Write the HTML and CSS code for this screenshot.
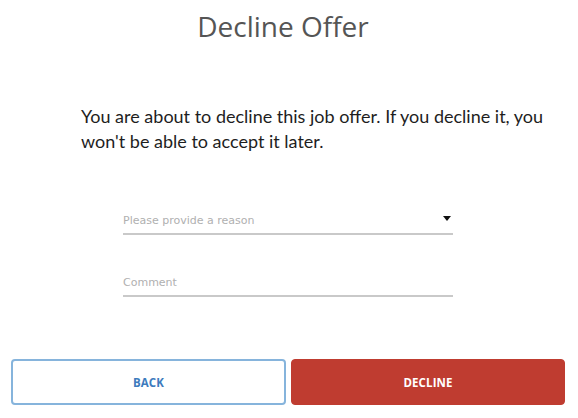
FILE: index.html
```html
<!DOCTYPE html>
<html>
<head>
<meta charset="utf-8">
<link rel="stylesheet" href="styles.css">
</head>
<body>
<div class="dialog">
  <h1 class="title">Decline Offer</h1>
  <p class="message">You are about to decline this job offer. If you decline it, you won't be able to accept it later.</p>
  <div class="form">
    <div class="field select">
      <span class="placeholder">Please provide a reason</span>
      <svg class="caret" width="8" height="5" viewBox="0 0 8 5"><path d="M0 0H8L4 5Z" fill="#111"/></svg>
    </div>
    <div class="field comment">
      <span class="placeholder">Comment</span>
    </div>
  </div>
  <div class="actions">
    <button class="btn btn-back">BACK</button>
    <button class="btn btn-decline">DECLINE</button>
  </div>
</div>
</body>
</html>
```
FILE: styles.css
```css
html, body {
  margin: 0;
  padding: 0;
  background: #fff;
}
.dialog {
  width: 578px;
  height: 418px;
  display: flex;
  flex-direction: column;
  box-sizing: border-box;
}
.title {
  margin: 0;
  padding: 4px 12px 0 0;
  height: 44px;
  text-align: center;
  font-family: "Open Sans", sans-serif;
  font-weight: 400;
  font-size: 28px;
  line-height: 44px;
  color: #555;
}
.message {
  margin: 56px 0 0 81px;
  width: 470px;
  font-family: Lato, sans-serif;
  font-size: 18px;
  line-height: 25px;
  color: #1e1e1e;
}
.form {
  margin: 51px 0 0 123px;
  width: 330px;
  display: flex;
  flex-direction: column;
  gap: 32px;
}
.field {
  height: 30px;
  border-bottom: 2px solid #c9c9c9;
  display: flex;
  align-items: center;
  justify-content: space-between;
  box-sizing: border-box;
  padding-top: 2px;
}
.placeholder {
  font-family: "DejaVu Sans", sans-serif;
  font-size: 11px;
  color: #b0b0b0;
}
.caret {
  margin-right: 2px;
  margin-top: -3px;
}
.actions {
  margin: 62px 0 0 11px;
  display: flex;
  gap: 5px;
}
.btn {
  width: 275px;
  height: 46px;
  border-radius: 4px;
  font-family: "Open Sans", sans-serif;
  font-weight: 700;
  font-size: 11.5px;
  letter-spacing: 0.1px;
  cursor: pointer;
  box-sizing: border-box;
}
.btn-back {
  background: #fff;
  border: 2px solid #86b4dc;
  color: #3d7bbd;
}
.btn-decline {
  width: 274px;
  background: #bf3c30;
  border: 1px solid #bf3c30;
  color: #fff;
}
```
